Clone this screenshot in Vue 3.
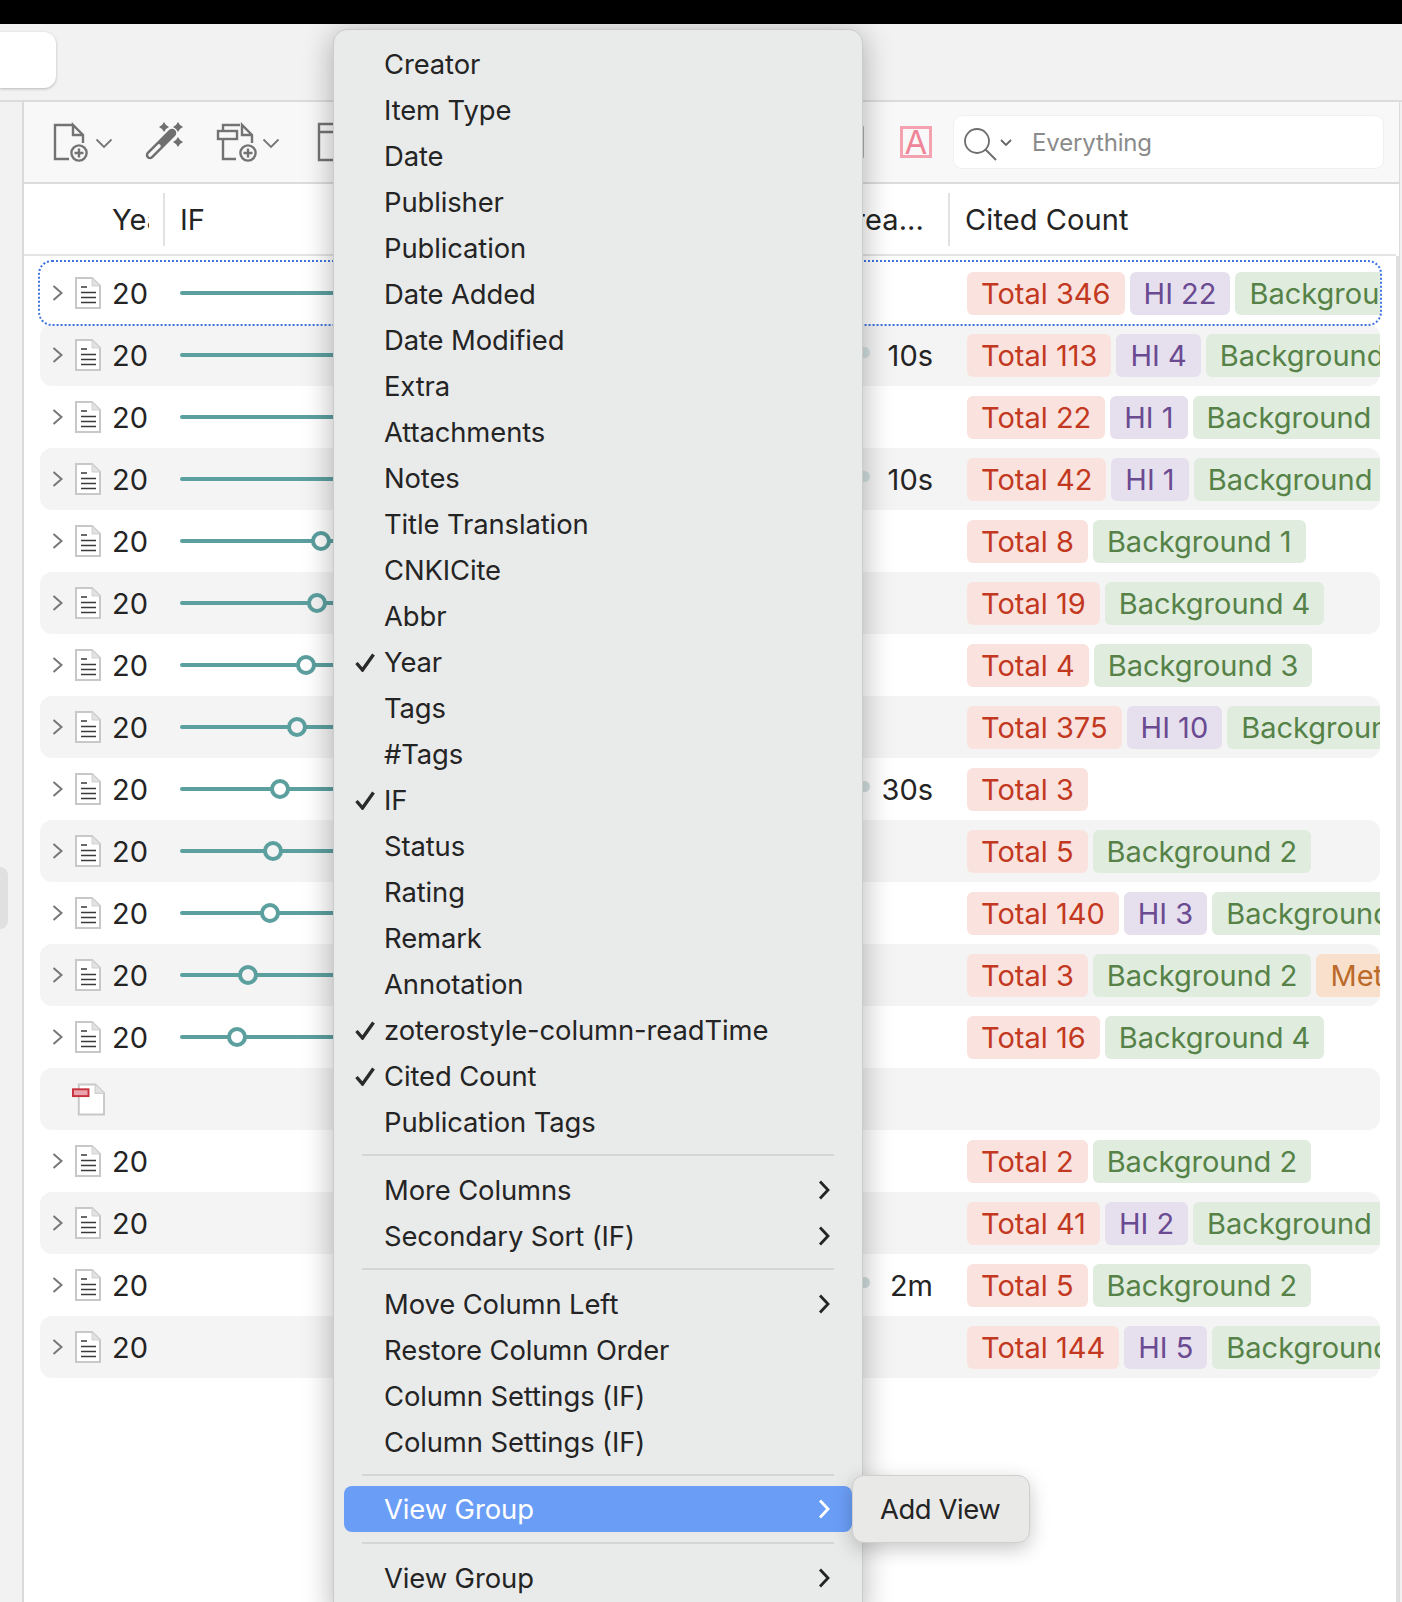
<script setup>
const T = 'total', H = 'hi', B = 'bg', M = 'met'
const rows = [
  { pos: null, time: '', tags: [[T, 'Total 346'], [H, 'HI 22'], [B, 'Background 3']], focus: true },
  { pos: null, time: '10s', tags: [[T, 'Total 113'], [H, 'HI 4'], [B, 'Background 3']] },
  { pos: null, time: '', tags: [[T, 'Total 22'], [H, 'HI 1'], [B, 'Background 3']] },
  { pos: null, time: '10s', tags: [[T, 'Total 42'], [H, 'HI 1'], [B, 'Background 3']] },
  { pos: 131, time: '', tags: [[T, 'Total 8'], [B, 'Background 1']] },
  { pos: 127, time: '', tags: [[T, 'Total 19'], [B, 'Background 4']] },
  { pos: 116, time: '', tags: [[T, 'Total 4'], [B, 'Background 3']] },
  { pos: 107, time: '', tags: [[T, 'Total 375'], [H, 'HI 10'], [B, 'Background 3']] },
  { pos: 90, time: '30s', tags: [[T, 'Total 3']] },
  { pos: 83, time: '', tags: [[T, 'Total 5'], [B, 'Background 2']] },
  { pos: 80, time: '', tags: [[T, 'Total 140'], [H, 'HI 3'], [B, 'Background 3']] },
  { pos: 58, time: '', tags: [[T, 'Total 3'], [B, 'Background 2'], [M, 'Methods 1']] },
  { pos: 47, time: '', tags: [[T, 'Total 16'], [B, 'Background 4']] },
  { blank: true, tags: [] },
  { pos: -1, time: '', tags: [[T, 'Total 2'], [B, 'Background 2']] },
  { pos: -1, time: '', tags: [[T, 'Total 41'], [H, 'HI 2'], [B, 'Background 3']] },
  { pos: -1, time: '2m', tags: [[T, 'Total 5'], [B, 'Background 2']] },
  { pos: -1, time: '', tags: [[T, 'Total 144'], [H, 'HI 5'], [B, 'Background 3']] }
]
const columns = [
  ['Creator'], ['Item Type'], ['Date'], ['Publisher'], ['Publication'], ['Date Added'], ['Date Modified'],
  ['Extra'], ['Attachments'], ['Notes'], ['Title Translation'], ['CNKICite'], ['Abbr'], ['Year', true],
  ['Tags'], ['#Tags'], ['IF', true], ['Status'], ['Rating'], ['Remark'], ['Annotation'],
  ['zoterostyle-column-readTime', true], ['Cited Count', true], ['Publication Tags']
]
</script>

<template>
  <div class="app">
    <div class="blackbar"></div>
    <div class="tabbar"><div class="tab"></div></div>
    <div class="main">
      <div class="sidebar"><div class="pill"></div></div>
      <div class="pane">
        <div class="toolbar">
          <svg class="ic ic-new" width="40" height="40" viewBox="0 0 40 40">
            <path d="M20 3H3V37H17M31 21V13L21 3V13H31" fill="none" stroke="#737373" stroke-width="2.4"/>
            <circle cx="27" cy="31" r="7.6" fill="#f8f8f8" stroke="#737373" stroke-width="2.4"/>
            <path d="M27 26.5V35.5M22.5 31H31.5" stroke="#737373" stroke-width="2.4"/>
          </svg>
          <svg class="caret" width="18" height="11" viewBox="0 0 18 11"><path d="M1.5 1.5L9 9L16.5 1.5" fill="none" stroke="#777" stroke-width="1.8"/></svg>
          <svg class="ic ic-wand" width="40" height="40" viewBox="0 0 40 40">
            <path d="M6 33L28 11" stroke="#6f6f6f" stroke-width="8.5" stroke-linecap="round"/>
            <path d="M6 33L15 24" stroke="#f8f8f8" stroke-width="3.6" stroke-linecap="round"/>
            <path d="M20 0L22 3L25 5L22 7L20 10L18 7L15 5L18 3ZM34 0L36 3L39 5L36 7L34 10L32 7L29 5L32 3ZM34 15L36 18L39 20L36 22L34 25L32 22L29 20L32 18Z" fill="#6f6f6f"/>
          </svg>
          <svg class="ic ic-att" width="42" height="40" viewBox="0 0 42 40">
            <path d="M7 14V37H20M24 3H7V8M36 21V13L26 3V13H36" fill="none" stroke="#737373" stroke-width="2.4"/>
            <rect x="2" y="9" width="19" height="8" fill="#f8f8f8" stroke="#737373" stroke-width="2.4"/>
            <circle cx="32" cy="31" r="7.6" fill="#f8f8f8" stroke="#737373" stroke-width="2.4"/>
            <path d="M32 26.5V35.5M27.5 31H36.5" stroke="#737373" stroke-width="2.4"/>
          </svg>
          <svg class="caret caret2" width="18" height="11" viewBox="0 0 18 11"><path d="M1.5 1.5L9 9L16.5 1.5" fill="none" stroke="#777" stroke-width="1.8"/></svg>
          <svg class="ic ic-coll" width="40" height="40" viewBox="0 0 40 40">
            <path d="M2 2H38V38H2ZM2 10H38" fill="none" stroke="#737373" stroke-width="2.4"/>
          </svg>
          <div class="spacer"></div>
          <svg class="ic ic-edge" width="6" height="32" viewBox="0 0 6 32"><path d="M3 1V31" stroke="#666" stroke-width="3" stroke-linecap="round"/></svg>
          <div class="a-icon">A</div>
          <div class="search">
            <svg width="34" height="34" viewBox="0 0 34 34">
              <circle cx="14" cy="14" r="12" fill="none" stroke="#6e6e6e" stroke-width="1.8"/>
              <path d="M22.5 22.5L33 33" stroke="#6e6e6e" stroke-width="2"/>
            </svg>
            <svg class="search-caret" width="12" height="7" viewBox="0 0 12 7"><path d="M1 1L6 6L11 1" fill="none" stroke="#666" stroke-width="1.8"/></svg>
            <span class="placeholder">Everything</span>
          </div>
        </div>

        <div class="head">
          <div class="hc-year"><span>Year</span></div>
          <div class="hc-if">IF</div>
          <div class="hc-cited">Cited Count</div>
        </div>

        <div class="list">
          <div v-for="(r, i) in rows" :key="i" class="row" :class="{ alt: i % 2 === 1, focus: r.focus }">
            <template v-if="r.blank">
              <svg class="blank-doc" width="33" height="34" viewBox="0 0 34 34">
                <path d="M7 2H24L33 11V33H7Z" fill="#fff" stroke="#c8c8c8" stroke-width="2"/>
                <path d="M24 2V11H33" fill="#e4e4e4" stroke="#d2d2d2" stroke-width="1.5"/>
                <rect x="1" y="7" width="16" height="7" fill="#e8a5ad" stroke="#c9333f" stroke-width="2"/>
              </svg>
            </template>
            <template v-else>
              <svg class="twisty" width="11" height="16" viewBox="0 0 11 16"><path d="M1.5 1L9.5 8L1.5 15" fill="none" stroke="#777" stroke-width="2"/></svg>
              <svg class="doc" width="26" height="32" viewBox="0 0 26 32">
                <path d="M1 1H17L25 9V31H1Z" fill="#fff" stroke="#c8c8c8" stroke-width="2"/>
                <path d="M17 1V9H25Z" fill="#e2e2e2" stroke="#d2d2d2" stroke-width="1"/>
                <path d="M6 10H12M6 15.5H21M6 20.5H21M6 25.5H21" stroke="#3a3a3a" stroke-width="1.7"/>
              </svg>
              <div class="year">20</div>
              <div class="ifcell">
                <div v-if="r.pos !== -1" class="track"></div>
                <div v-if="r.pos !== null && r.pos !== -1" class="knob" :style="{ left: r.pos + 'px' }"></div>
              </div>
              <div class="timecell">
                <div v-if="r.time" class="timebar"></div>
                <span v-if="r.time" class="timetxt">{{ r.time }}</span>
              </div>
              <div class="tags">
                <span v-for="t in r.tags" :key="t[1]" class="tag" :class="t[0]">{{ t[1] }}</span>
              </div>
            </template>
          </div>
        </div>
      </div>
      <div class="strip"></div>
    </div>

    <div class="menu">
      <div v-for="c in columns" :key="c[0]" class="item">
        <span class="slot">
          <svg v-if="c[1]" width="20" height="19" viewBox="0 0 20 19"><path d="M1.5 10L7.5 17L18.5 1.5" fill="none" stroke="#2a2a2a" stroke-width="3.4"/></svg>
        </span>{{ c[0] }}
      </div>
      <div class="sep"></div>
      <div class="item"><span class="slot"></span>More Columns<svg class="more" width="12" height="20" viewBox="0 0 12 20"><path d="M2 1.5L10 10L2 18.5" fill="none" stroke="currentColor" stroke-width="2.8"/></svg></div>
      <div class="item"><span class="slot"></span>Secondary Sort (IF)<svg class="more" width="12" height="20" viewBox="0 0 12 20"><path d="M2 1.5L10 10L2 18.5" fill="none" stroke="currentColor" stroke-width="2.8"/></svg></div>
      <div class="sep"></div>
      <div class="item"><span class="slot"></span>Move Column Left<svg class="more" width="12" height="20" viewBox="0 0 12 20"><path d="M2 1.5L10 10L2 18.5" fill="none" stroke="currentColor" stroke-width="2.8"/></svg></div>
      <div class="item"><span class="slot"></span>Restore Column Order</div>
      <div class="item"><span class="slot"></span>Column Settings (IF)</div>
      <div class="item"><span class="slot"></span>Column Settings (IF)</div>
      <div class="sep sep-b"></div>
      <div class="item active"><span class="slot"></span>View Group<svg class="more" width="12" height="20" viewBox="0 0 12 20"><path d="M2 1.5L10 10L2 18.5" fill="none" stroke="currentColor" stroke-width="2.8"/></svg></div>
      <div class="sep sep-c"></div>
      <div class="item"><span class="slot"></span>View Group<svg class="more" width="12" height="20" viewBox="0 0 12 20"><path d="M2 1.5L10 10L2 18.5" fill="none" stroke="currentColor" stroke-width="2.8"/></svg></div>
    </div>
    <div class="submenu">Add View</div>
  </div>
</template>

<style>
html, body { margin: 0; padding: 0; overflow: hidden; background: #fff; }
</style>

<style scoped>
.app {
  position: relative;
  width: 1402px;
  height: 1602px;
  overflow: hidden;
  display: flex;
  flex-direction: column;
  font-family: Inter, "Liberation Sans", sans-serif;
  font-size: 29px;
  color: #242424;
  background: #fff;
}
.blackbar { height: 24px; background: #000; flex: none; }
.tabbar {
  flex: none;
  background: #f2f2f2;
  border-bottom: 2px solid #dcdcdc;
  padding-top: 8px;
  height: 68px;
}
.tab {
  width: 56px;
  height: 56px;
  background: #fff;
  border-radius: 0 12px 12px 0;
  box-shadow: 0 1px 3px rgba(0, 0, 0, .25);
}
.main { flex: 1; display: flex; min-height: 0; }
.sidebar {
  position: relative;
  width: 22px;
  flex: none;
  background: #f2f2f2;
  border-right: 2px solid #dadada;
}
.pill {
  position: absolute;
  left: 0;
  top: 765px;
  width: 8px;
  height: 62px;
  background: #e0e0e0;
  border-radius: 0 8px 8px 0;
}
.pane { flex: 1; min-width: 0; display: flex; flex-direction: column; background: #fff; }
.strip { flex: none; background: #f1f1f1; border-left: 1px solid #dcdcdc; width: 2px; }
.toolbar {
  height: 80px;
  flex: none;
  display: flex;
  align-items: center;
  background: #f8f8f8;
  border-bottom: 2px solid #dcdcdc;
  padding-left: 28px;
  padding-right: 15px;
  overflow: hidden;
}
.ic, .caret { flex: none; display: block; }
.caret { margin-left: 3px; margin-top: 3px; }
.ic-wand { margin-left: 31px; }
.ic-att { margin-left: 32px; }
.caret2 { margin-left: 4px; }
.ic-coll { margin-left: 37px; }
.spacer { flex: 1; }
.ic-edge { margin-right: 35px; }
.a-icon {
  width: 26px;
  height: 26px;
  flex: none;
  margin-right: 21px;
  border: 3px solid #f4a2b2;
  color: #ef8499;
  font-size: 33px;
  line-height: 26px;
  text-align: center;
}
.search {
  width: 429px;
  height: 52px;
  flex: none;
  display: flex;
  align-items: center;
  background: #fff;
  border: 1px solid #f0f0f0;
  border-radius: 9px;
}
.search svg:first-child { margin-left: 9px; margin-top: 4px; }
.search-caret { margin-left: 3px; }
.placeholder { margin-left: 20px; font-size: 24px; letter-spacing: -.15px; color: #8b8b8b; }

.head {
  height: 72px;
  flex: none;
  display: flex;
  align-items: center;
  border-bottom: 2px solid #e4e4e4;
  margin-right: 3px;
  padding-top: 1px;
  box-sizing: border-box;
}
.hc-year {
  flex: none;
  width: 37px;
  margin-left: 88px;
  height: 53px;
  line-height: 53px;
  overflow: hidden;
}
.hc-if {
  flex: none;
  width: 768px;
  margin-left: 14px;
  padding-left: 15px;
  border-left: 2px solid #e2e2e2;
  height: 53px;
  line-height: 53px;
  overflow: hidden;
  white-space: nowrap;
}
.hc-cited {
  height: 53px;
  line-height: 53px;
  border-left: 2px solid #e2e2e2;
  padding-left: 15px;
  position: relative;
  letter-spacing: .1px;
}
.hc-cited::before {
  content: "rea...";
  position: absolute;
  right: 100%;
  margin-right: 26px;
  white-space: nowrap;
}
.list { flex: 1; padding: 6px 16px 0; border-right: 3px solid #e0e0e0; }
.row {
  position: relative;
  height: 62px;
  display: flex;
  align-items: center;
  border-radius: 12px;
  box-sizing: border-box;
  line-height: 34px;
}
.row.alt { background: #f4f4f4; }
.row.focus { outline: 2px dotted #3f74e0; outline-offset: 0; z-index: 1; }
.twisty { margin-left: 12px; flex: none; }
.doc { margin-left: 12px; flex: none; }
.blank-doc { margin-left: 32px; flex: none; }
.year { width: 68px; margin-left: 11px; flex: none; padding-top: 2px; }
.ifcell { position: relative; width: 660px; height: 24px; flex: none; }
.track {
  position: absolute;
  left: 0;
  right: 0;
  top: 10px;
  height: 4px;
  border-radius: 2px;
  background: #5c9f9f;
}
.knob {
  position: absolute;
  top: 2px;
  width: 20px;
  height: 20px;
  box-sizing: border-box;
  border: 4.5px solid #5c9f9f;
  border-radius: 50%;
  background: #fff;
}
.row.alt .knob { background: #f4f4f4; }
.timecell {
  position: relative;
  width: 93px;
  flex: none;
  text-align: right;
  white-space: nowrap;
  padding-top: 2px;
}
.timebar {
  position: absolute;
  left: -10px;
  top: 10px;
  width: 40px;
  height: 11px;
  border-radius: 6px;
  background: #d3e0e1;
}
.tags {
  flex: 1;
  min-width: 0;
  margin-left: 34px;
  display: flex;
  gap: 5px;
  overflow: hidden;
  white-space: nowrap;
}
.tag {
  flex: none;
  height: 43px;
  line-height: 43px;
  padding: 0 14px;
  border-radius: 6px;
}
.total { background: #fae3df; color: #c23820; }
.hi { background: #e6dfee; color: #6a4a91; }
.bg { background: #dfecde; color: #568248; }
.met { background: #f8e0cc; color: #bb6a2a; }

.menu {
  position: absolute;
  left: 333px;
  top: 29px;
  width: 530px;
  height: 1590px;
  box-sizing: border-box;
  padding: 11px 10px 0;
  background: #e9eaea;
  border: 1px solid #cbcbcb;
  border-radius: 14px;
  box-shadow: 0 4px 30px rgba(0, 0, 0, .3);
  font-size: 27.4px;
  letter-spacing: -.1px;
  z-index: 5;
}
.item {
  height: 46px;
  line-height: 45px;
  display: flex;
  align-items: center;
  padding-right: 22px;
  border-radius: 8px;
  white-space: pre;
}
.slot { width: 40px; flex: none; display: flex; align-items: center; padding-left: 11px; box-sizing: border-box; }
.more { margin-left: auto; flex: none; }
.item.active { background: #6a9ef6; color: #fff; }
.sep { height: 2px; margin: 9px 18px 11px; background: #d4d5d5; }
.sep-b { margin-bottom: 10px; }
.sep-c { margin-top: 10px; }
.submenu {
  position: absolute;
  left: 852px;
  top: 1475px;
  width: 178px;
  height: 68px;
  box-sizing: border-box;
  padding-left: 27px;
  line-height: 67px;
  font-size: 27.4px;
  letter-spacing: -.4px;
  background: #e9e9e8;
  border: 1px solid #cfcfcf;
  border-radius: 12px;
  box-shadow: 0 6px 20px rgba(0, 0, 0, .22);
  z-index: 6;
}
</style>
